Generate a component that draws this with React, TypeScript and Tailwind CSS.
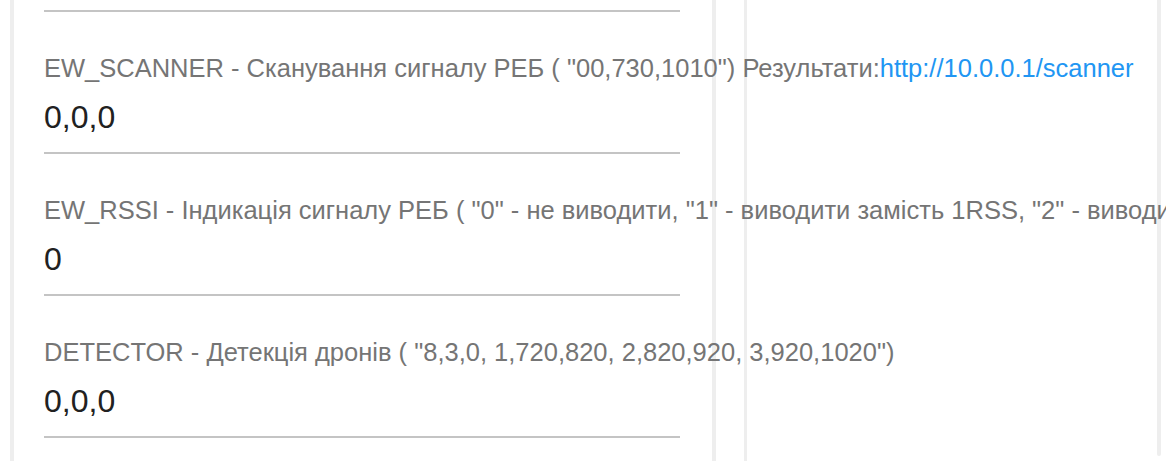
import React from "react";

const rows: { label: React.ReactNode; value: string }[] = [
  {
    label: (
      <>
        EW_SCANNER - Сканування сигналу РЕБ ( "00,730,1010") Результати:
        <span className="text-[#2196f3]">http://10.0.0.1/scanner</span>
      </>
    ),
    value: "0,0,0",
  },
  {
    label:
      'EW_RSSI - Індикація сигналу РЕБ ( "0" - не виводити, "1" - виводити замість 1RSS, "2" - виводити замість 2RSS")',
    value: "0",
  },
  {
    label:
      'DETECTOR - Детекція дронів ( "8,3,0, 1,720,820, 2,820,920, 3,920,1020")',
    value: "0,0,0",
  },
];

export default function App() {
  return (
    <div
      className="flex h-[461px] w-[1166px] overflow-hidden bg-white"
      style={{ fontFamily: '"Liberation Sans", Arial, sans-serif' }}
    >
      <div className="ml-[10px] w-[706px] shrink-0 border-x-4 border-[#eeeeee] pl-[30px] pr-[32px]">
        <div className="mt-[10px] h-[2px] bg-[#c4c4c4]" />
        {rows.map((r, i) => (
          <div key={i} className="flex flex-col">
            <div className="relative z-10 mt-[43px] h-[26px] whitespace-nowrap text-[25.5px] leading-[26px] text-[#757575]">
              {r.label}
            </div>
            <div className="mt-[20px] h-[32px] text-[32px] leading-[32px] text-[#212121]">
              {r.value}
            </div>
            <div className="mt-[19px] h-[2px] bg-[#c4c4c4]" />
          </div>
        ))}
      </div>
      <div className="ml-[28px] flex-1 border-l-[3px] border-[#eeeeee]" />
      <div className="mr-[5px] h-[456px] w-[4px] shrink-0 rounded-b-full bg-[#eeeeee]" />
    </div>
  );
}
